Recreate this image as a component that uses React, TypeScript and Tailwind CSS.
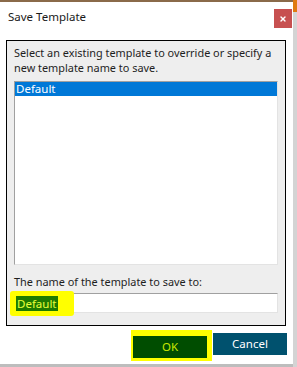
import { X } from 'lucide-react'

const font = { fontFamily: '"Noto Sans", "Open Sans", sans-serif' }

function ListBox() {
  return (
    <div className="mt-[6px] h-[184px] w-[264px] border border-t-[#a0a0a0] border-l-[#a0a0a0] border-r-[#e3e3e3] border-b-[#e3e3e3] bg-white">
      <div className="flex h-[14px] items-center bg-[#0078d7] pl-[1px] text-[11.5px] leading-none text-white">Default</div>
    </div>
  )
}

function NameInput() {
  return (
    <div className="relative mt-[4px] flex h-[20px] w-[264px] items-center border border-t-[#a0a0a0] border-l-[#a0a0a0] border-r-[#e3e3e3] border-b-[#e3e3e3] bg-white pl-[1px]">
      {/* marker scribble over the selection */}
      <div className="absolute left-[-5px] top-[-3px] h-[25px] w-[64px] rounded-[3px] bg-[#ffff00]" />
      <span className="relative bg-[#1f7a00] px-[1px] text-[11.5px] leading-[15px] text-[#e8ff3a]">Default</span>
    </div>
  )
}

export default function App() {
  return (
    <div className="flex h-[367px] w-[297px] overflow-hidden bg-[#c8c8c8]" style={font}>
      <div className="flex w-[293px] flex-col">
        <div className="h-[2px] bg-[#8a6a4a]" />
        <div className="flex h-[362px] flex-col bg-white">
          <div className="flex items-start justify-between pl-[8px] pr-[1px] pt-[6px]">
            <span className="mt-[1px] text-[11.5px] leading-[16px] text-[#1a1a1a]">Save Template</span>
            <button className="mt-[1px] flex h-[19px] w-[18px] items-center justify-center bg-[#c75050] text-white">
              <X size={8} strokeWidth={4} />
            </button>
          </div>

          <div className="ml-[6px] mt-[12px] flex h-[286px] w-[280px] flex-col border border-black bg-[#eeeeee] pl-[7px] pt-[4px]">
            <p className="whitespace-nowrap text-[10.9px] leading-[15px] text-[#1e1e1e]">
              Select an existing template to override or specify a
              <br />
              new template name to save.
            </p>
            <ListBox />
            <p className="mt-[9px] whitespace-nowrap text-[10.9px] leading-[15px] text-[#1e1e1e]">
              The name of the template to save to:
            </p>
            <NameInput />
          </div>

          <div className="mt-[7px] flex justify-end gap-[6px] pr-[6px]">
            <div className="relative">
              <div className="absolute -bottom-[3px] -left-[2px] -right-[5px] -top-[3px] bg-[#ffff00]" />
              <button className="relative h-[22px] w-[74px] bg-[#004d00] text-[11.5px] text-[#c9e800]">OK</button>
            </div>
            <button className="h-[22px] w-[74px] bg-[#00516e] text-[11.5px] text-white">Cancel</button>
          </div>
        </div>
        <div className="h-[3px] bg-[#bdbdbd]" />
      </div>
      <div className="flex w-[4px] flex-col">
        <div className="h-[12px] bg-[#e07a10]" />
        <div className="flex-1 bg-[#d4d4d4]" />
      </div>
    </div>
  )
}
